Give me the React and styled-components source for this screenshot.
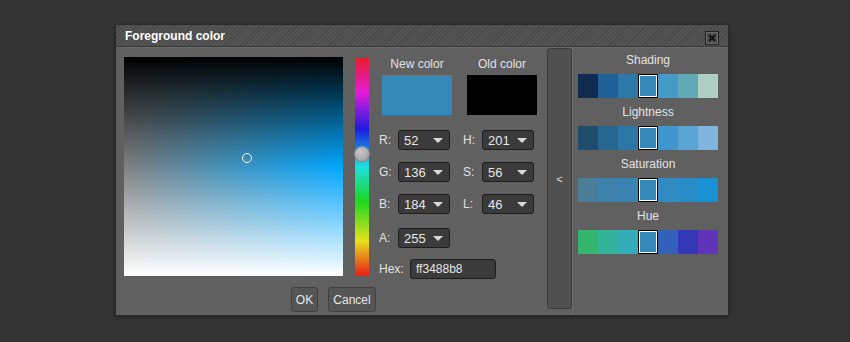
import React from "react";
import styled, { createGlobalStyle } from "styled-components";

const GlobalStyle = createGlobalStyle`
  html, body {
    margin: 0;
    background: #333333;
    font-family: "Liberation Sans", Arial, sans-serif;
  }
`;

const Page = styled.div`
  padding: 24px 0 0 115px;
  height: 342px;
  box-sizing: border-box;
`;

const Window = styled.div`
  width: 614px;
  background: #606060;
  border: 1px solid #2a2a2a;
  box-sizing: border-box;
  box-shadow: 0 1px 3px rgba(0, 0, 0, 0.4);
`;

const TitleBar = styled.div`
  height: 21px;
  display: flex;
  align-items: center;
  justify-content: space-between;
  padding: 0 9px 0 9px;
  background: repeating-linear-gradient(
    -45deg,
    #474747 0px,
    #474747 1px,
    #545454 1px,
    #545454 3px
  );
  border-bottom: 1px solid #3a3a3a;
`;

const Title = styled.div`
  color: #ffffff;
  font-weight: bold;
  font-size: 12px;
`;

const CloseButton = styled.div`
  width: 12px;
  height: 12px;
  margin-top: 5px;
  background: #505050;
  border: 1px solid #222;
  box-shadow: inset 0 0 0 1px #6a6a6a;
  display: flex;
  align-items: center;
  justify-content: center;
`;

const Body = styled.div`
  display: flex;
  height: 267px;
  border-top: 1px solid #6a6a6a;
`;

const LeftPane = styled.div`
  width: 431px;
  padding: 9px 0 0 8px;
  box-sizing: border-box;
  display: flex;
  flex-direction: column;
`;

const TopRow = styled.div`
  display: flex;
`;

const Canvas = styled.div`
  position: relative;
  width: 219px;
  height: 219px;
  background: linear-gradient(
      to bottom,
      #000 0%,
      rgba(0, 0, 0, 0) 50%,
      rgba(255, 255, 255, 0) 50%,
      #fff 100%
    ),
    linear-gradient(to right, #808080, hsl(201, 100%, 50%));
`;

const Marker = styled.div`
  position: absolute;
  width: 8px;
  height: 8px;
  border: 1.5px solid #fff;
  border-radius: 50%;
  transform: translate(-50%, -50%);
`;

const HueBar = styled.div`
  position: relative;
  width: 14px;
  height: 219px;
  margin-left: 12px;
  background: linear-gradient(
    to bottom,
    #e81c28 0%,
    #e41cd8 16%,
    #1c1ce0 33%,
    #1ce0e0 50%,
    #1cd81c 66%,
    #e8e01c 84%,
    #e81c1c 100%
  );
`;

const HueThumb = styled.div`
  position: absolute;
  left: 50%;
  width: 14px;
  height: 14px;
  border-radius: 50%;
  background: radial-gradient(circle at 40% 35%, #c8c8c8, #9a9a9a);
  border: 1px solid #8a8a8a;
  transform: translate(-50%, -50%);
`;

const Controls = styled.div`
  width: 158px;
  margin-left: 10px;
  display: flex;
  flex-direction: column;
`;

const SwatchPair = styled.div`
  display: flex;
  gap: 15px;
  padding-left: 3px;
`;

const SwatchBox = styled.div`
  display: flex;
  flex-direction: column;
  align-items: center;
  gap: 3px;
`;

const Label = styled.div`
  color: #e2e2e2;
  font-size: 12px;
  line-height: 15px;
`;

const Swatch = styled.div`
  width: 70px;
  height: 40px;
  background: ${(p) => p.color};
`;

const FieldGrid = styled.div`
  display: grid;
  grid-template-columns: 84px 74px;
  margin-top: 15px;
  row-gap: ${(p) => p.gap}px;
`;

const Field = styled.div`
  display: flex;
  align-items: center;
  height: 20px;
`;

const FieldLabel = styled.span`
  color: #e2e2e2;
  font-size: 12px;
  width: ${(p) => p.w || 19}px;
`;

const Select = styled.div`
  width: 52px;
  height: 20px;
  box-sizing: border-box;
  background: #3b3b3b;
  border: 1px solid #1e1e1e;
  border-radius: 3px;
  display: flex;
  align-items: center;
  justify-content: space-between;
  padding: 0 6px 0 5px;
  color: #e6e6e6;
  font-size: 13px;
`;

const Arrow = styled.span`
  width: 0;
  height: 0;
  border-left: 5px solid transparent;
  border-right: 5px solid transparent;
  border-top: 5px solid #d8d8d8;
`;

const HexInput = styled.div`
  width: 86px;
  height: 20px;
  box-sizing: border-box;
  background: #3b3b3b;
  border: 1px solid #1e1e1e;
  border-radius: 3px;
  display: flex;
  align-items: center;
  padding-left: 5px;
  color: #e6e6e6;
  font-size: 12px;
`;

const ButtonRow = styled.div`
  display: flex;
  gap: 10px;
  padding-left: 167px;
  margin-top: 8px;
`;

const Button = styled.div`
  width: ${(p) => p.w}px;
  height: 25px;
  box-sizing: border-box;
  background: #555555;
  border: 1px solid #404040;
  border-radius: 3px;
  display: flex;
  align-items: center;
  justify-content: center;
  color: #e6e6e6;
  font-size: 12px;
`;

const Toggle = styled.div`
  width: 25px;
  height: 261px;
  box-sizing: border-box;
  background: #505050;
  border: 1px solid #3c3c3c;
  border-radius: 3px;
  display: flex;
  align-items: center;
  justify-content: center;
  color: #e0e0e0;
  font-size: 11px;
`;

const RightPane = styled.div`
  flex: 1;
  padding: 2px 0 0 5px;
  border-left: 1px solid #6c6c6c;
  display: flex;
  flex-direction: column;
  align-items: flex-start;
`;

const Group = styled.div`
  width: 140px;
  display: flex;
  flex-direction: column;
  align-items: center;
  margin-bottom: 4px;
`;

const GroupLabel = styled.div`
  color: #e2e2e2;
  font-size: 12px;
  height: 24px;
  line-height: 20px;
`;

const Strip = styled.div`
  display: flex;
  height: 24px;
  width: 140px;
`;

const Cell = styled.div`
  width: 20px;
  height: 24px;
  box-sizing: border-box;
  background: ${(p) => p.color};
  ${(p) =>
    p.selected
      ? "border: 1px solid #000; box-shadow: inset 0 0 0 1px #fff;"
      : ""}
`;

const groups = [
  {
    name: "Shading",
    colors: ["#0f2c50", "#1f6096", "#2c78a9", "#3488b8", "#4499c6", "#62a9b8", "#aecfc3"],
  },
  {
    name: "Lightness",
    colors: ["#1e4c6a", "#27668f", "#2d77a6", "#3488b8", "#3f96cf", "#5aa4d4", "#80b6dd"],
  },
  {
    name: "Saturation",
    colors: ["#4b7d9b", "#3e81ac", "#3a84b2", "#3488b8", "#2f8bc0", "#2a8cc7", "#1890d4"],
  },
  {
    name: "Hue",
    colors: ["#34b56e", "#33b49a", "#34adb8", "#3488b8", "#3360b8", "#3438b8", "#5f34b8"],
  },
];

const SelectField = ({ label, value }) => (
  <Field>
    <FieldLabel>{label}</FieldLabel>
    <Select>
      <span>{value}</span>
      <Arrow />
    </Select>
  </Field>
);

export default function App() {
  return (
    <Page>
      <GlobalStyle />
      <Window>
        <TitleBar>
          <Title>Foreground color</Title>
          <CloseButton>
            <svg width="8" height="8" viewBox="0 0 8 8">
              <path d="M1 1 L7 7 M7 1 L1 7" stroke="#111" strokeWidth="2" />
            </svg>
          </CloseButton>
        </TitleBar>
        <Body>
          <LeftPane>
            <TopRow>
              <Canvas>
                <Marker style={{ left: "56%", top: "46%" }} />
              </Canvas>
              <HueBar>
                <HueThumb style={{ top: `${((360 - 201) / 360) * 100}%` }} />
              </HueBar>
              <Controls>
                <SwatchPair>
                  <SwatchBox>
                    <Label>New color</Label>
                    <Swatch color="#3488b8" />
                  </SwatchBox>
                  <SwatchBox>
                    <Label>Old color</Label>
                    <Swatch color="#000000" />
                  </SwatchBox>
                </SwatchPair>
                <FieldGrid gap={12}>
                  <SelectField label="R:" value="52" />
                  <SelectField label="H:" value="201" />
                  <SelectField label="G:" value="136" />
                  <SelectField label="S:" value="56" />
                  <SelectField label="B:" value="184" />
                  <SelectField label="L:" value="46" />
                </FieldGrid>
                <FieldGrid gap={11} style={{ marginTop: 14 }}>
                  <SelectField label="A:" value="255" />
                  <span />
                </FieldGrid>
                <Field style={{ marginTop: 11 }}>
                  <FieldLabel w={31}>Hex:</FieldLabel>
                  <HexInput>ff3488b8</HexInput>
                </Field>
              </Controls>
            </TopRow>
            <ButtonRow>
              <Button w={27}>OK</Button>
              <Button w={48}>Cancel</Button>
            </ButtonRow>
          </LeftPane>
          <Toggle>&lt;</Toggle>
          <RightPane>
            {groups.map((g) => (
              <Group key={g.name}>
                <GroupLabel>{g.name}</GroupLabel>
                <Strip>
                  {g.colors.map((c, i) => (
                    <Cell key={i} color={c} selected={i === 3} />
                  ))}
                </Strip>
              </Group>
            ))}
          </RightPane>
        </Body>
      </Window>
    </Page>
  );
}
